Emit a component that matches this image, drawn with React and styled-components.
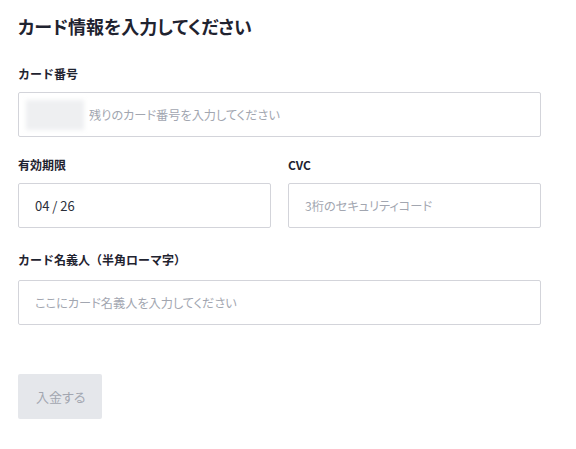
import React from 'react'
import styled, { createGlobalStyle } from 'styled-components'

const Global = createGlobalStyle`
  body {
    margin: 0;
    background: #ffffff;
    font-family: "Noto Sans CJK JP", "Noto Sans", sans-serif;
    color: #1f2330;
  }
`

const Page = styled.form`
  padding: 13px 35px 0 18px;
  width: 523px;
`

const Title = styled.h1`
  margin: 0;
  font-size: 18px;
  line-height: 27px;
  font-weight: 700;
  font-feature-settings: "palt";
`

const Field = styled.div`
  display: flex;
  flex-direction: column;
  margin-top: ${(p) => p.$top}px;
`

const Label = styled.label`
  font-size: 12px;
  line-height: 18px;
  font-weight: 700;
  margin-bottom: ${(p) => p.$gap || 9}px;
`

const Row = styled.div`
  display: grid;
  grid-template-columns: 1fr 1fr;
  column-gap: 17px;
  margin-top: 19px;
`

const Box = styled.div`
  display: flex;
  align-items: center;
  height: 45px;
  box-sizing: border-box;
  border: 1px solid #d3d4da;
  border-radius: 2px;
  background: #fff;
  padding: 0 7px;
  overflow: hidden;
`

const Masked = styled.span`
  width: 58px;
  height: 30px;
  margin-right: 5px;
  background: #eeeff1;
  filter: blur(2px);
  flex-shrink: 0;
`

const Input = styled.input`
  flex: 1;
  min-width: 0;
  border: none;
  outline: none;
  padding: 0 0 0 ${(p) => p.$pad ?? 9}px;
  font-family: inherit;
  font-size: 13px;
  color: #2b2f3a;
  font-feature-settings: "palt";
  background: transparent;

  &::placeholder {
    font-size: 12.2px;
    color: #a2a6b0;
  }
`

const Submit = styled.button`
  margin-top: 49px;
  height: 45px;
  padding: 0 17px 0 18px;
  border: none;
  border-radius: 2px;
  background: #e5e7eb;
  color: #a2a6b0;
  font-family: inherit;
  font-size: 13px;
  font-feature-settings: "palt";
`

export default function App() {
  return (
    <>
      <Global />
      <Page onSubmit={(e) => e.preventDefault()}>
        <Title>カード情報を入力してください</Title>

        <Field $top={25}>
          <Label>カード番号</Label>
          <Box>
            <Masked />
            <Input $pad={0} placeholder="残りのカード番号を入力してください" />
          </Box>
        </Field>

        <Row>
          <Field $top={0}>
            <Label>有効期限</Label>
            <Box>
              <Input defaultValue="04 / 26" />
            </Box>
          </Field>
          <Field $top={0}>
            <Label>CVC</Label>
            <Box>
              <Input placeholder="3桁のセキュリティコード" />
            </Box>
          </Field>
        </Row>

        <Field $top={23}>
          <Label $gap={11}>カード名義人（半角ローマ字）</Label>
          <Box>
            <Input placeholder="ここにカード名義人を入力してください" />
          </Box>
        </Field>

        <Submit type="submit" disabled>入金する</Submit>
      </Page>
    </>
  )
}
